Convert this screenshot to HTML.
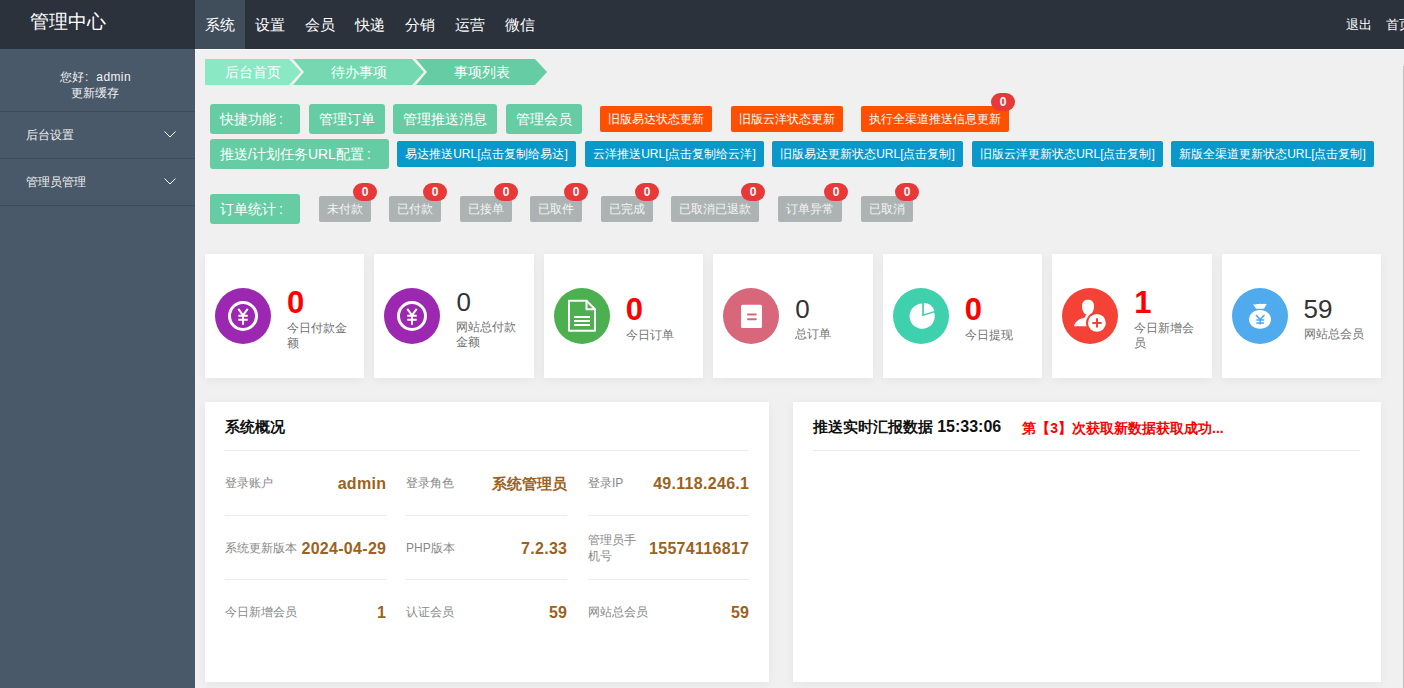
<!DOCTYPE html>
<html><head><meta charset="utf-8">
<style>
*{margin:0;padding:0;box-sizing:border-box}
html,body{width:1404px;height:688px;overflow:hidden;background:#f0f0f0;font-family:"Liberation Sans",sans-serif;}
.abs{position:absolute}
.col{margin-left:3px}
#hdr{position:absolute;left:0;top:0;width:1404px;height:49px;background:#2c323c}
#hdrline{position:absolute;left:195px;top:49px;width:1209px;height:1px;background:#fafafa}
#logo{position:absolute;left:30px;top:9px;font-size:19px;line-height:26px;color:#fff}
.nav{position:absolute;top:0;height:49px;width:50px;line-height:49px;text-align:center;font-size:15px;color:#fff}
.nav.on{background:#404d5b}
.tr{position:absolute;top:0;line-height:49px;font-size:13px;color:#fff;white-space:nowrap}
#side{position:absolute;left:0;top:49px;width:195px;height:639px;background:#4a596a}
#side .user{position:absolute;left:-3px;top:20px;width:195px;text-align:center;font-size:12px;line-height:16px;color:#f2f2f2}
.sdiv{position:absolute;left:0;width:195px;height:1px;background:#3f4b59}
.menu{position:absolute;left:26px;font-size:12px;color:#f0f0f0;line-height:16px}
.chev{position:absolute;left:164px;width:12px;height:7px}
#vline{position:absolute;left:1403px;top:66px;width:1px;height:622px;background:#c2c2c2}
.bc{position:absolute;top:59px;height:26px;line-height:26px;font-size:14px;color:#fff;text-align:center}
.btn{position:absolute;height:30px;line-height:30px;font-size:14px;color:#fff;background:#66cca4;border-radius:3px;padding:0 10px;white-space:nowrap}
.ob{position:absolute;top:106px;height:26px;line-height:26px;font-size:12px;color:#fff;background:#ff5000;border-radius:2px;text-align:center;white-space:nowrap}
.bb{position:absolute;top:141px;height:26px;line-height:26px;font-size:12px;color:#fff;background:#0a98ca;border-radius:2px;text-align:center;white-space:nowrap}
.gb{position:absolute;top:196px;height:26px;line-height:26px;font-size:12px;color:#f4f4f4;background:#adb3b3;border-radius:2px;text-align:center;white-space:nowrap}
.badge{position:absolute;width:24px;height:18px;border-radius:9px;background:#e8393a;color:#fff;font-size:12px;font-weight:bold;line-height:18px;text-align:center}
.card{position:absolute;top:254px;width:159.429px;height:124px;background:#fff;box-shadow:0 2px 10px rgba(0,0,0,.05)}
.ic{position:absolute;left:10px;top:34px;width:56px;height:56px;border-radius:50%}
.ic svg{position:absolute;left:0;top:0}
.ct{position:absolute;left:82px;top:2px;width:70px;height:124px;display:flex;flex-direction:column;justify-content:center}
.num{font-size:26px;line-height:30px;color:#333}
.num.b{font-weight:bold;color:#f00;font-size:31px;line-height:32px;position:relative;top:1px}
.lbl{font-size:12px;line-height:15px;color:#727272;margin-top:3px}
.panel{position:absolute;top:402px;height:280px;background:#fff;box-shadow:0 2px 10px rgba(0,0,0,.05)}
.ptitle{position:absolute;left:20px;top:15px;font-size:15px;font-weight:bold;color:#111;line-height:20px;white-space:nowrap}
.pdiv{position:absolute;left:20px;top:48px;height:1px;background:#ebebeb}
.cell{position:absolute;width:161px;height:64px;display:flex;align-items:center;justify-content:space-between}
.cell .k{font-size:12px;color:#888;line-height:16px}
.cell .v{font-size:16px;font-weight:bold;color:#9c6220;white-space:nowrap;letter-spacing:0.3px;margin-right:-0.3px;position:relative;top:1px}
.cell .v.cj{font-size:15px;letter-spacing:0;margin-right:0}
.rdiv{position:absolute;height:1px;width:161px;background:#ececec}
</style></head><body>
<div id="hdr"></div>
<div id="logo">管理中心</div>
<div class="nav on" style="left:195px">系统</div>
<div class="nav" style="left:245px">设置</div>
<div class="nav" style="left:295px">会员</div>
<div class="nav" style="left:345px">快递</div>
<div class="nav" style="left:395px">分销</div>
<div class="nav" style="left:445px">运营</div>
<div class="nav" style="left:495px">微信</div>
<div class="tr" style="left:1346px">退出</div>
<div class="tr" style="left:1386px">首页</div>
<div id="hdrline"></div>

<div id="side">
  <div class="user"><span style="position:relative;left:1px">您好<span style="margin-left:1px">:</span><span style="margin-left:8px;letter-spacing:0.4px">admin</span></span><br>更新缓存</div>
  <div class="sdiv" style="top:62px"></div>
  <div class="menu" style="top:78px">后台设置</div>
  <svg class="chev" style="top:82px" width="12" height="7" viewBox="0 0 12 7"><path d="M0.5 0.5 L6 6 L11.5 0.5" fill="none" stroke="#fff" stroke-width="1"/></svg>
  <div class="sdiv" style="top:109px"></div>
  <div class="menu" style="top:125px">管理员管理</div>
  <svg class="chev" style="top:129px" width="12" height="7" viewBox="0 0 12 7"><path d="M0.5 0.5 L6 6 L11.5 0.5" fill="none" stroke="#fff" stroke-width="1"/></svg>
  <div class="sdiv" style="top:156px"></div>
</div>
<div id="vline"></div>

<!-- breadcrumb -->
<div class="bc" style="left:205px;width:96px;background:#8ae8c4;clip-path:polygon(0 0,84px 0,96px 13px,84px 26px,0 26px)"><span style="position:relative;left:0px">后台首页</span></div>
<div class="bc" style="left:293px;width:131px;background:#74d8b0;clip-path:polygon(0 0,119px 0,131px 13px,119px 26px,0 26px,11px 13px)"><span style="position:relative;left:0px">待办事项</span></div>
<div class="bc" style="left:416px;width:131px;background:#66cca4;clip-path:polygon(0 0,119px 0,131px 13px,119px 26px,0 26px,11px 13px)"><span>事项列表</span></div>

<!-- row 1 -->
<div class="btn" style="left:210px;top:104px;width:90px">快捷功能<span class="col">:</span></div>
<div class="btn" style="left:309px;top:104px;width:76px">管理订单</div>
<div class="btn" style="left:393px;top:104px;width:104px">管理推送消息</div>
<div class="btn" style="left:506px;top:104px;width:76px">管理会员</div>
<div class="ob" style="left:600px;width:112px">旧版易达状态更新</div>
<div class="ob" style="left:731px;width:112px">旧版云洋状态更新</div>
<div class="ob" style="left:861px;width:148px">执行全渠道推送信息更新</div>
<div class="badge" style="left:991px;top:93px">0</div>

<!-- row 2 -->
<div class="btn" style="left:210px;top:139px;width:179px">推送/计划任务URL配置<span class="col">:</span></div>
<div class="bb" style="left:397px;width:179px">易达推送URL[点击复制给易达]</div>
<div class="bb" style="left:585px;width:179px">云洋推送URL[点击复制给云洋]</div>
<div class="bb" style="left:772px;width:191px">旧版易达更新状态URL[点击复制]</div>
<div class="bb" style="left:972px;width:191px">旧版云洋更新状态URL[点击复制]</div>
<div class="bb" style="left:1171px;width:203px">新版全渠道更新状态URL[点击复制]</div>

<!-- row 3 -->
<div class="btn" style="left:210px;top:194px;width:90px">订单统计<span class="col">:</span></div>
<div class="gb" style="left:319px;width:52px">未付款</div><div class="badge" style="left:353px;top:183px">0</div>
<div class="gb" style="left:389px;width:52px">已付款</div><div class="badge" style="left:423px;top:183px">0</div>
<div class="gb" style="left:460px;width:52px">已接单</div><div class="badge" style="left:494px;top:183px">0</div>
<div class="gb" style="left:530px;width:52px">已取件</div><div class="badge" style="left:564px;top:183px">0</div>
<div class="gb" style="left:601px;width:52px">已完成</div><div class="badge" style="left:635px;top:183px">0</div>
<div class="gb" style="left:671px;width:88px">已取消已退款</div><div class="badge" style="left:741px;top:183px">0</div>
<div class="gb" style="left:778px;width:64px">订单异常</div><div class="badge" style="left:824px;top:183px">0</div>
<div class="gb" style="left:861px;width:52px">已取消</div><div class="badge" style="left:895px;top:183px">0</div>

<!-- cards -->
<div class="card" style="left:205.000px">
  <div class="ic" style="background:#9c27b0">
    <svg width="56" height="56" viewBox="0 0 56 56"><circle cx="28" cy="28" r="13.5" fill="none" stroke="#fff" stroke-width="3"/><path d="M23.3 20.8 L28 27.3 L32.7 20.8 M28 27.3 V36.8 M23.3 27.8 H32.7 M23.3 31.7 H32.7" fill="none" stroke="#fff" stroke-width="2"/></svg>
  </div>
  <div class="ct"><div class="num b">0</div><div class="lbl">今日付款金额</div></div>
</div>
<div class="card" style="left:374.429px">
  <div class="ic" style="background:#9c27b0">
    <svg width="56" height="56" viewBox="0 0 56 56"><circle cx="28" cy="28" r="13.5" fill="none" stroke="#fff" stroke-width="3"/><path d="M23.3 20.8 L28 27.3 L32.7 20.8 M28 27.3 V36.8 M23.3 27.8 H32.7 M23.3 31.7 H32.7" fill="none" stroke="#fff" stroke-width="2"/></svg>
  </div>
  <div class="ct"><div class="num">0</div><div class="lbl">网站总付款金额</div></div>
</div>
<div class="card" style="left:543.857px">
  <div class="ic" style="background:#4caf50">
    <svg width="56" height="56" viewBox="0 0 56 56"><path d="M15 12.8 H32.5 L41 21.3 V42.8 H15 Z" fill="none" stroke="#fff" stroke-width="2" stroke-linejoin="round"/><path d="M32.5 12.8 V21.3 H41" fill="none" stroke="#fff" stroke-width="2" stroke-linejoin="round"/><path d="M20 29 H36 M20 33 H36 M20 37 H36" stroke="#fff" stroke-width="2"/></svg>
  </div>
  <div class="ct"><div class="num b">0</div><div class="lbl">今日订单</div></div>
</div>
<div class="card" style="left:713.286px">
  <div class="ic" style="background:#d9677c">
    <svg width="56" height="56" viewBox="0 0 56 56"><rect x="18" y="16.7" width="21" height="23.3" rx="1.5" fill="#fff"/><path d="M25 26.5 H32.8 M25 31.3 H32.8" stroke="#d9677c" stroke-width="2" stroke-linecap="round"/></svg>
  </div>
  <div class="ct"><div class="num">0</div><div class="lbl">总订单</div></div>
</div>
<div class="card" style="left:882.714px">
  <div class="ic" style="background:#3fd0ad">
    <svg width="56" height="56" viewBox="0 0 56 56"><path d="M29.2 28.3 V15.6 A12.6 12.6 0 1 0 41.2 24.5 Z" fill="#fff"/><path d="M30.9 26.2 V15 A11.2 11.2 0 0 1 41.3 22.9 Z" fill="#fff"/></svg>
  </div>
  <div class="ct"><div class="num b">0</div><div class="lbl">今日提现</div></div>
</div>
<div class="card" style="left:1052.143px">
  <div class="ic" style="background:#f44336">
    <svg width="56" height="56" viewBox="0 0 56 56"><path d="M20 18.5 C20 13.5 22.5 11.8 26 11.8 C29.5 11.8 32 13.5 32 18.5 C32 23 29.5 26.8 26 27.2 C22.5 26.8 20 23 20 18.5 Z" fill="#fff"/><path d="M12 38.2 C13 33.5 17.5 30.6 22.5 29.8 L24 27 L28 27 L29 38.2 Z" fill="#fff"/><circle cx="34.9" cy="34.9" r="10.9" fill="#f44336"/><circle cx="34.9" cy="34.9" r="8.9" fill="#fff"/><path d="M30.3 34.9 H39.7 M35 30.2 V39.6" stroke="#f44336" stroke-width="2"/></svg>
  </div>
  <div class="ct"><div class="num b">1</div><div class="lbl">今日新增会员</div></div>
</div>
<div class="card" style="left:1221.571px">
  <div class="ic" style="background:#50aaee">
    <svg width="56" height="56" viewBox="0 0 56 56"><path d="M21 16 C22.5 16.5 23.5 17 24.5 16.2 C25.5 15.6 26.5 16.5 27.8 15.8 C29 15.2 30 16.5 31.2 15.9 C32.5 15.5 33.5 16.2 34.7 16 L32 20.8 H24 Z" fill="#fff"/><path d="M28 22 C34 22 39 26 39 31.5 C39 37 34 40.7 28 40.7 C22 40.7 17 37 17 31.5 C17 26 22 22 28 22 Z" fill="#fff"/><path d="M24 27 L28.2 31.5 L32.4 27 M28.2 31.5 V36.5 M24.3 32 H32.1 M24.3 35 H32.1" fill="none" stroke="#50aaee" stroke-width="1.6"/></svg>
  </div>
  <div class="ct"><div class="num">59</div><div class="lbl">网站总会员</div></div>
</div>

<!-- panels -->
<div class="panel" style="left:205px;width:564px">
  <div class="ptitle">系统概况</div>
  <div class="pdiv" style="width:523px"></div>
  <div class="cell" style="left:20px;top:49px"><span class="k">登录账户</span><span class="v">admin</span></div>
  <div class="cell" style="left:201px;top:49px"><span class="k">登录角色</span><span class="v cj">系统管理员</span></div>
  <div class="cell" style="left:383px;top:49px"><span class="k">登录IP</span><span class="v">49.118.246.1</span></div>
  <div class="rdiv" style="left:20px;top:113px"></div><div class="rdiv" style="left:201px;top:113px"></div><div class="rdiv" style="left:383px;top:113px"></div>
  <div class="cell" style="left:20px;top:114px"><span class="k">系统更新版本</span><span class="v">2024-04-29</span></div>
  <div class="cell" style="left:201px;top:114px"><span class="k">PHP版本</span><span class="v">7.2.33</span></div>
  <div class="cell" style="left:383px;top:114px"><span class="k" style="width:50px">管理员手机号</span><span class="v">15574116817</span></div>
  <div class="rdiv" style="left:20px;top:177px"></div><div class="rdiv" style="left:201px;top:177px"></div><div class="rdiv" style="left:383px;top:177px"></div>
  <div class="cell" style="left:20px;top:178px"><span class="k">今日新增会员</span><span class="v">1</span></div>
  <div class="cell" style="left:201px;top:178px"><span class="k">认证会员</span><span class="v">59</span></div>
  <div class="cell" style="left:383px;top:178px"><span class="k">网站总会员</span><span class="v">59</span></div>
</div>
<div class="panel" style="left:793px;width:588px">
  <div class="ptitle">推送实时汇报数据 <span style="font-size:16px">15:33:06</span><span style="color:#f00;font-size:14px;margin-left:21px;position:relative;top:1px">第【3】次获取新数据获取成功...</span></div>
  <div class="pdiv" style="width:547px"></div>
</div>
</body></html>
